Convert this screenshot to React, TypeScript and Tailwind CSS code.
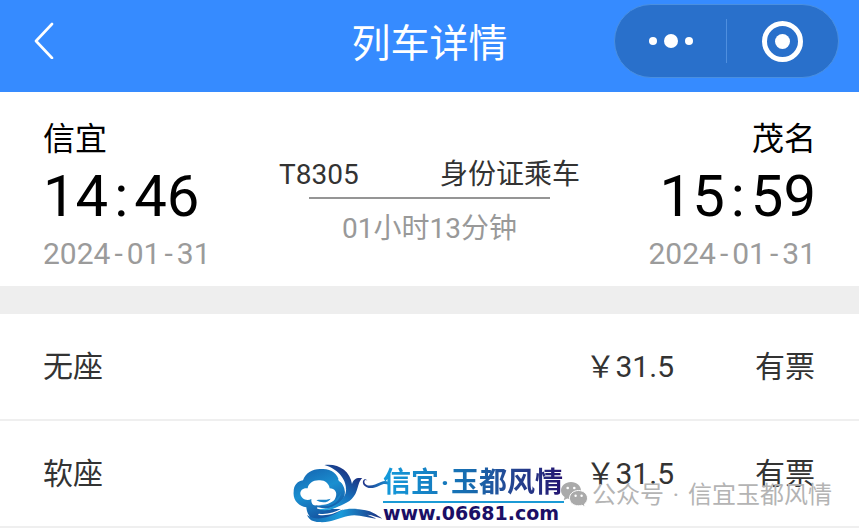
type Stop = {
  city: string;
  time: string;
  date: string;
};

type Seat = {
  name: string;
  price: string;
  status: string;
};

const departure: Stop = { city: "信宜", time: "14:46", date: "2024-01-31" };
const arrival: Stop = { city: "茂名", time: "15:59", date: "2024-01-31" };

const seats: Seat[] = [
  { name: "无座", price: "31.5", status: "有票" },
  { name: "软座", price: "31.5", status: "有票" },
];

function Header() {
  return (
    <header className="relative flex h-[92px] items-center justify-center bg-[#368bff] pb-1">
      <button
        type="button"
        aria-label="返回"
        className="absolute top-4 left-5 flex h-12 w-12 items-center justify-center text-white"
      >
        <svg width="22" height="38" viewBox="0 0 22 38" fill="none" aria-hidden="true">
          <path
            d="M19 3 3 20 19 37"
            stroke="currentColor"
            strokeWidth="2.600"
            strokeLinecap="round"
            strokeLinejoin="round"
          />
        </svg>
      </button>

      <h1 className="text-[39px] leading-[48px] text-white">列车详情</h1>

      <div className="absolute top-1 right-5 flex h-[74px] w-[225px] items-center rounded-full border border-[#4a8fe0] bg-[#2970cb] text-white">
        <button
          type="button"
          aria-label="更多"
          className="flex h-full flex-1 items-center justify-center gap-[7px]"
        >
          <span className="h-2 w-2 rounded-full bg-white" />
          <span className="h-[14px] w-[14px] rounded-full bg-white" />
          <span className="h-2 w-2 rounded-full bg-white" />
        </button>
        <span className="h-11 w-px bg-[#4f8fdf]" />
        <button
          type="button"
          aria-label="关闭"
          className="flex h-full flex-1 items-center justify-center"
        >
          <span className="flex h-[41px] w-[41px] items-center justify-center rounded-full border-[5px] border-white">
            <span className="h-[15px] w-[15px] rounded-full bg-white" />
          </span>
        </button>
      </div>
    </header>
  );
}

function StopInfo({ stop, end = false }: { stop: Stop; end?: boolean }) {
  const [hours, minutes] = stop.time.split(":");
  const [year, month, day] = stop.date.split("-");

  return (
    <div className={end ? "flex flex-col items-end" : "flex flex-col items-start"}>
      <p className="text-[32px] leading-[48px] text-black">{stop.city}</p>
      <p className="text-[58px] leading-[66px] text-black">
        {hours}
        <span className="mx-[6px]">:</span>
        {minutes}
      </p>
      <p className="text-[30px] leading-[50px] text-[#9b9b9b]">
        {year}
        <span className="mx-1">-</span>
        {month}
        <span className="mx-1">-</span>
        {day}
      </p>
    </div>
  );
}

function TripSummary() {
  return (
    <section className="grid grid-cols-[1fr_auto_1fr] px-[43px] pt-[23px] pb-[7px]">
      <StopInfo stop={departure} />
      <div className="flex w-[301px] flex-col pt-10 text-[28px] leading-[40px]">
        <div className="flex justify-between text-[#333]">
          <span>T8305</span>
          <span>身份证乘车</span>
        </div>
        <div className="mx-[30px] my-[2px] h-[2px] bg-[#959595]" />
        <p className="pt-2 text-center text-[#999]">01小时13分钟</p>
      </div>
      <StopInfo stop={arrival} end />
    </section>
  );
}

function CloudLogo() {
  return (
    <svg width="96" height="60" viewBox="40 22 288 180" aria-hidden="true">
      <defs>
        <linearGradient id="cloud" x1="0" y1="0" x2="0.400" y2="1">
          <stop offset="0" stopColor="#1560ad" />
          <stop offset="0.500" stopColor="#1a8fd0" />
          <stop offset="1" stopColor="#14529f" />
        </linearGradient>
        <linearGradient id="feather" x1="0" y1="1" x2="0.700" y2="0">
          <stop offset="0" stopColor="#25b1e6" />
          <stop offset="0.500" stopColor="#1672bd" />
          <stop offset="1" stopColor="#1c2474" />
        </linearGradient>
        <linearGradient id="ribbon" x1="0" y1="0" x2="1" y2="0">
          <stop offset="0" stopColor="#1767b1" />
          <stop offset="0.450" stopColor="#1a9bda" />
          <stop offset="1" stopColor="#1b2a7c" />
        </linearGradient>
        <linearGradient id="hook" x1="0" y1="0" x2="1" y2="0">
          <stop offset="0" stopColor="#20348a" />
          <stop offset="1" stopColor="#1a8dcf" />
        </linearGradient>
      </defs>
      <path
        fill="url(#cloud)"
        d="M70 74C78 50 101 38 126 40C154 38 174 54 178 76C198 86 204 108 195 130C188 147 170 157 150 160L190 160C172 184 150 196 126 199C100 198 82 182 80 155C57 151 39 134 42 108C42 90 53 76 70 74Z"
      />
      <path
        fill="#fff"
        d="M84 98C86 83 101 73 119 74C135 73 148 83 150 98C165 98 174 111 168 125C162 145 140 152 110 149C100 151 94 143 95 130C80 138 64 128 62 115C61 103 71 96 84 98Z"
      />
      <path
        fill="none"
        stroke="#fff"
        strokeWidth="4"
        strokeLinecap="round"
        d="M178 72C202 91 204 122 184 141C168 157 144 165 114 157"
      />
      <path
        fill="url(#feather)"
        d="M134 28C174 22 211 44 217 85C222 69 232 65 248 68C237 76 237 91 231 105C222 132 201 143 174 153C157 162 135 168 116 160C151 162 186 143 197 115C208 80 178 39 134 28Z"
      />
      <path
        fill="#1a84c8"
        d="M110 134C119 130 136 135 153 129C146 142 124 143 110 134ZM116 148C146 151 170 134 184 112C181 139 153 159 116 148Z"
      />
      <path
        fill="none"
        stroke="#fff"
        strokeWidth="4"
        strokeLinecap="round"
        d="M118 176C148 180 171 170 194 157"
      />
      <path
        fill="url(#ribbon)"
        d="M82 178C113 199 149 184 174 170C200 154 233 160 258 164C275 166 290 177 308 189C292 185 280 178 263 177C276 183 284 184 289 189C260 187 236 174 205 181C177 187 151 202 118 199C101 199 89 193 82 178Z"
      />
      <path
        fill="url(#hook)"
        d="M263 75C257 70 251 76 256 84C266 95 285 88 304 79C313 75 320 75 328 80L328 88C318 83 310 84 299 90C280 100 262 100 252 88C245 76 255 65 263 75Z"
      />
    </svg>
  );
}

function SiteLogo() {
  return (
    <div className="flex">
      <CloudLogo />
      <div className="-ml-[6px] flex w-[181px] flex-col pt-[2px]">
        <div className="flex bg-linear-to-r from-[#139bdc] via-[#1769ad] to-[#23106f] bg-clip-text text-[28px] leading-[36px] font-bold text-transparent">
          <span>信宜</span>
          <span className="w-3 text-center">·</span>
          <span>玉都风情</span>
        </div>
        <div className="h-[2px] bg-[#1b9ad5]" />
        <div className="font-['DejaVu_Sans'] text-[19px] leading-[20px] font-bold text-[#1b0f66]">
          www.06681.com
        </div>
      </div>
    </div>
  );
}

function WechatIcon() {
  return (
    <svg width="27" height="26" viewBox="0 0 27 26" aria-hidden="true">
      <path
        fill="#aaa"
        d="M10 0C4.300 0 0 3.800 0 8.500C0 11.200 1.400 13.500 3.600 15L2.700 18.200L6.300 16.400C8 17 9.500 17.100 11 17C17 16.500 20 12.500 20 8.500C20 3.800 15.700 0 10 0Z"
      />
      <path
        fill="#aaa"
        stroke="#fff"
        strokeWidth="1"
        d="M17.500 8.500C12.300 8.500 8.500 12 8.500 16.200C8.500 20.500 12.300 23.800 17.500 23.800C18.700 23.800 19.900 23.600 20.900 23.200L24.200 25L23.400 22.100C25.300 20.700 26.500 18.600 26.500 16.200C26.500 12 22.700 8.500 17.500 8.500Z"
      />
      <circle cx="6.700" cy="6" r="1.300" fill="#fff" />
      <circle cx="13.300" cy="6" r="1.300" fill="#fff" />
      <circle cx="14.600" cy="13.800" r="1.200" fill="#fff" />
      <circle cx="20.600" cy="13.800" r="1.200" fill="#fff" />
    </svg>
  );
}

function Watermark() {
  return (
    <div className="pointer-events-none absolute right-[27px] bottom-[5px] flex items-end">
      <SiteLogo />
      <div className="-ml-[3px] flex items-center pb-[10px] text-[#b4b4b4]">
        <WechatIcon />
        <div className="ml-1 flex text-[24px] leading-[36px]">
          <span>公众号</span>
          <span className="w-6 text-center">·</span>
          <span>信宜玉都风情</span>
        </div>
      </div>
    </div>
  );
}

function SeatTable() {
  return (
    <section className="relative">
      <table className="w-full border-collapse text-[30px] leading-[41px] text-[#333]">
        <tbody>
          {seats.map((seat) => (
            <tr key={seat.name} className="border-b-2 border-[#efefef]">
              <th scope="row" className="py-8 pl-[43px] text-left font-normal">
                {seat.name}
              </th>
              <td className="py-8 text-right">￥{seat.price}</td>
              <td className="w-[185px] py-8 pr-11 text-right">{seat.status}</td>
            </tr>
          ))}
        </tbody>
      </table>
      <Watermark />
    </section>
  );
}

export default function App() {
  return (
    <main className="w-full overflow-hidden bg-white font-[Roboto,'Noto_Sans_CJK_SC',sans-serif]">
      <Header />
      <TripSummary />
      <div className="h-7 bg-[#eee]" />
      <SeatTable />
    </main>
  );
}
